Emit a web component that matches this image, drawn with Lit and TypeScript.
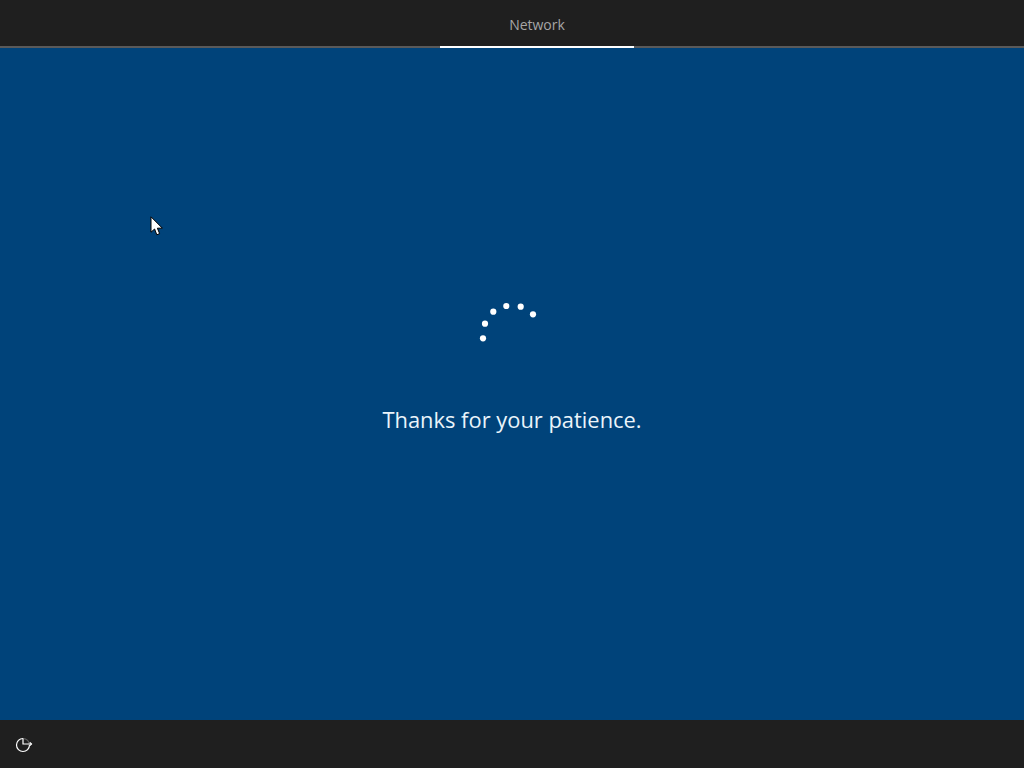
import { LitElement, html, svg, css } from "lit";
import { customElement } from "lit/decorators.js";

const dots: [number, number][] = [
  [13, 43.3],
  [15, 28.7],
  [23.3, 16.7],
  [36.3, 11],
  [50.7, 11.7],
  [63, 19.3],
];

@customElement("app-root")
export class AppRoot extends LitElement {
  static styles = css`
    :host {
      display: flex;
      flex-direction: column;
      width: 1024px;
      height: 768px;
      background: #00437a;
      font-family: "Open Sans", "Noto Sans", "Liberation Sans", sans-serif;
      overflow: hidden;
      position: relative;
    }
    .top {
      height: 46px;
      background: #1f1f1f;
      display: flex;
      justify-content: center;
      padding-left: 50px;
      border-bottom: 2px solid #5a5a5a;
      flex: none;
    }
    .tab {
      width: 194px;
      height: 48px;
      box-sizing: border-box;
      border-bottom: 2px solid #ffffff;
      display: flex;
      align-items: center;
      justify-content: center;
      color: #a6a6a6;
      font-size: 14px;
      padding-top: 3px;
    }
    .main {
      flex: 1;
      display: flex;
      flex-direction: column;
      align-items: center;
      padding-top: 247px;
    }
    .spinner {
      display: block;
      width: 80px;
      height: 55px;
      flex: none;
      margin-right: 4px;
    }
    .spinner circle {
      fill: #ffffff;
    }
    .msg {
      margin-top: 55px;
      color: #eaf4fb;
      font-size: 21.9px;
      line-height: 30px;
      font-weight: 400;
    }
    .bottom {
      height: 48px;
      background: #1f1f1f;
      flex: none;
      display: flex;
      align-items: center;
      padding-left: 15px;
    }
    .bottom svg {
      display: block;
      width: 18px;
      height: 18px;
      margin-top: 2px;
    }
    .cursor {
      position: absolute;
      left: 150px;
      top: 216px;
      width: 13px;
      height: 20px;
    }
  `;

  render() {
    return html`
      <div class="top"><div class="tab">Network</div></div>
      <div class="main">
        <svg class="spinner" viewBox="0 0 80 55" aria-hidden="true">
          ${dots.map(([x, y]) => svg`<circle cx="${x}" cy="${y}" r="3.1"></circle>`)}
        </svg>
        <div class="msg">Thanks for your patience.</div>
      </div>
      <div class="bottom">
        <svg viewBox="0 0 18 18" fill="none" stroke="#ffffff" stroke-width="1.2" aria-hidden="true">
          <path d="M8 2.5 A6.5 6.5 0 1 0 14.5 9"></path>
          <path d="M8 2.5 A6.5 6.5 0 0 1 14.5 9" stroke-opacity="0.3"></path>
          <path d="M8 2.5 V8 H16.5"></path>
          <path d="M14.8 6.3 L16.5 8 L14.8 9.7"></path>
        </svg>
      </div>
      <svg class="cursor" viewBox="0 0 13 20" aria-hidden="true">
        <path d="M1 0.8 V16.2 L4.6 13 L6.8 18.8 L9.6 17.6 L7.4 12.2 H12.4 Z" fill="#fff" stroke="#000" stroke-width="1"></path>
      </svg>
    `;
  }
}
